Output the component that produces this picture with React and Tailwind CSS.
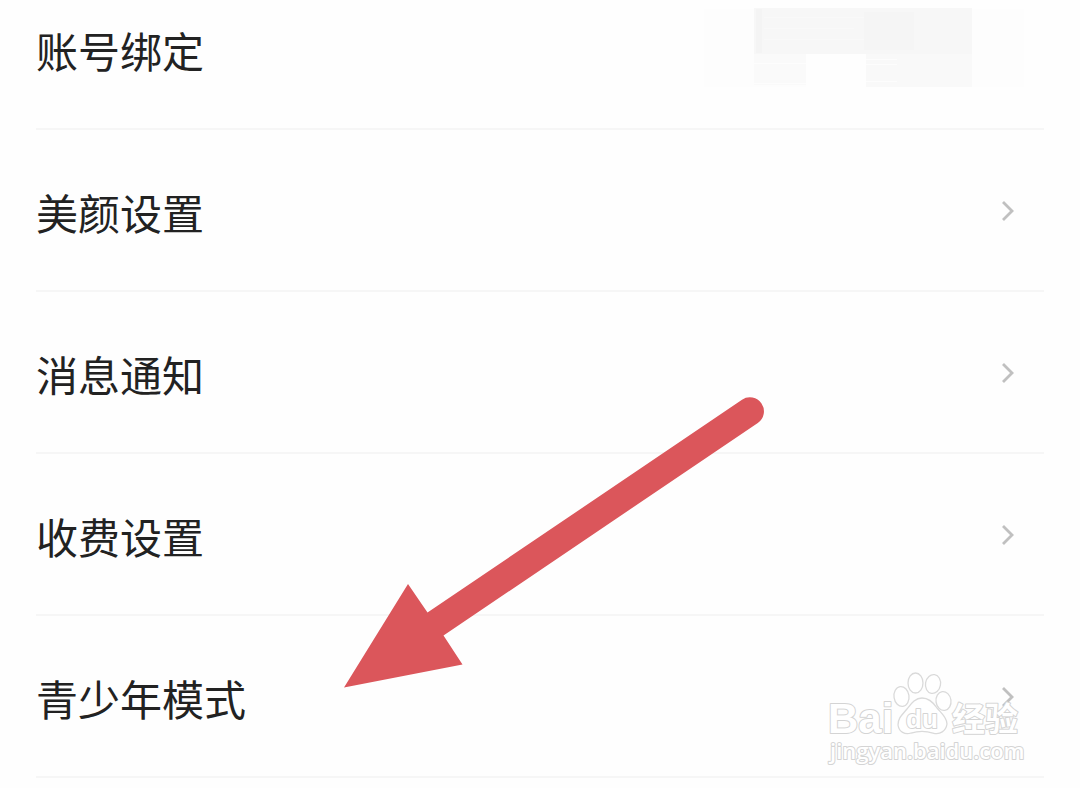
const rows = ["美颜设置", "消息通知", "收费设置", "青少年模式"];

function Chevron() {
  return (
    <svg
      aria-hidden="true"
      className="h-6 w-4 shrink-0"
      viewBox="0 0 16 24"
      fill="none"
      stroke="#c0c0c0"
      strokeWidth="2.8"
    >
      <path d="M3 4 L12 13 L3 22" />
    </svg>
  );
}

function BlurredAccount() {
  return (
    <svg aria-hidden="true" className="h-20 w-80 shrink-0" viewBox="0 0 320 80">
      <rect x="0" y="1" width="320" height="78" fill="#fdfdfd" />
      <rect x="50" y="0" width="218" height="46" fill="#f7f7f7" />
      <rect x="52" y="1" width="6" height="44" fill="#f4f4f4" />
      <rect x="160" y="4" width="50" height="38" fill="#f5f5f5" />
      <rect x="50" y="46" width="52" height="31" fill="#fafafa" />
      <rect x="102" y="46" width="60" height="33" fill="#fefefe" />
      <rect x="162" y="46" width="106" height="33" fill="#f9f9f9" />
      <path d="M50 55.500H102M50 75.500H102M162 51.500H193M162 56.500H193M162 73.500H193" stroke="#fdfdfd" />
      <path d="M60 9.500H160M60 20.500H150M60 31.500H160" stroke="#f9f9f9" />
    </svg>
  );
}

function Arrow() {
  return (
    <svg
      aria-hidden="true"
      className="pointer-events-none absolute left-[344px] top-[396px] h-[292px] w-[421px]"
      viewBox="344 396 421 292"
    >
      <path
        d="M344 687.500 L408 584 L427.500 612.500 L742 399.800 A14 14 0 0 1 757.800 423 L443.500 635.500 L462.500 664.500 Z"
        fill="#db565b"
      />
    </svg>
  );
}

function Watermark() {
  return (
    <svg
      className="pointer-events-none absolute left-[820px] top-[666px] h-[106px] w-[210px]"
      viewBox="820 666 210 106"
      role="img"
      aria-label="Baidu 经验 jingyan.baidu.com"
    >
      <g fill="#ffffff" fillOpacity="0.5" stroke="#dadada" strokeWidth="1.3">
        <ellipse cx="901.500" cy="696.500" rx="7.500" ry="10" transform="rotate(-8 901.500 696.500)" />
        <ellipse cx="915.500" cy="683" rx="7.500" ry="10" />
        <ellipse cx="933" cy="684" rx="7.500" ry="9.500" transform="rotate(10 933 684)" />
        <ellipse cx="943.500" cy="701" rx="7.500" ry="9.500" transform="rotate(-8 943.500 701)" />
        <path d="M922 698 C915 698 911 704 907 709 C902 715 898 718 898 725 C899 732 905 735 911 733 C918 731 926 731 933 733 C940 735 946 731 947 724 C947 717 941 713 937 708 C933 702 929 698 922 698Z" />
      </g>
      <g fill="#ffffff" stroke="#d4d4d4" strokeWidth="2" strokeLinejoin="round" paintOrder="stroke">
        <g fontFamily='"Liberation Sans", sans-serif' fontWeight="700">
          <text x="828" y="733" fontSize="42">Bai</text>
          <text x="906" y="728" fontSize="26">du</text>
        </g>
        <text x="952" y="731" fontSize="33" fontWeight="700" fontFamily='"Noto Sans CJK SC", sans-serif'>经验</text>
        <text x="830" y="759" fontSize="22" fontWeight="600" fontFamily='"Open Sans", sans-serif'>jingyan.baidu.com</text>
      </g>
    </svg>
  );
}

export default function App() {
  return (
    <main className="relative min-h-screen bg-[#fefefe] px-9 font-['Noto_Sans','Noto_Sans_CJK_SC',sans-serif] text-[42px] leading-[60px] text-[#222222]">
      <ul>
        <li className="border-b-2 border-[#f6f6f6]">
          <button type="button" className="flex w-full items-start justify-between pb-10 pr-5 pt-2 text-left">
            <span className="pt-[14px]">账号绑定</span>
            <BlurredAccount />
          </button>
        </li>
        {rows.map((label) => (
          <li key={label} className="border-b-2 border-[#f6f6f6]">
            <button type="button" className="flex h-40 w-full items-center justify-between pr-7 text-left">
              <span className="pt-2">{label}</span>
              <Chevron />
            </button>
          </li>
        ))}
      </ul>
      <Arrow />
      <Watermark />
    </main>
  );
}
